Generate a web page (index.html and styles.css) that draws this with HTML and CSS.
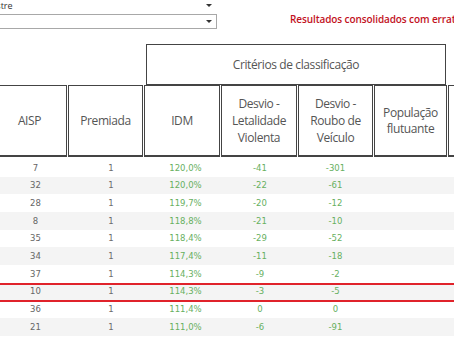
FILE: index.html
```html
<!DOCTYPE html>
<html lang="pt">
<head>
<meta charset="utf-8">
<link rel="stylesheet" href="styles.css">
</head>
<body>
<div class="page">
  <div class="top">
    <div class="filter">
      <div class="filter-title"><span class="ft-text">Semestre</span><span class="caret"></span></div>
      <div class="select"><span class="caret"></span></div>
    </div>
    <div class="notice">Resultados consolidados com errata</div>
  </div>

  <div class="group-row">
    <div class="group">Critérios de classificação</div>
  </div>

  <div class="thead">
    <div class="th">AISP</div>
    <div class="th">Premiada</div>
    <div class="th">IDM</div>
    <div class="th">Desvio -<br>Letalidade<br>Violenta</div>
    <div class="th">Desvio -<br>Roubo de<br>Veículo</div>
    <div class="th th-tight">População<br>flutuante</div>
    <div class="th"></div>
  </div>

  <div class="tbody">
    <div class="tr"><span class="c1">7</span><span class="c2">1</span><span class="c3">120,0%</span><span class="c4">-41</span><span class="c5">-301</span></div>
    <div class="tr"><span class="c1">32</span><span class="c2">1</span><span class="c3">120,0%</span><span class="c4">-22</span><span class="c5">-61</span></div>
    <div class="tr"><span class="c1">28</span><span class="c2">1</span><span class="c3">119,7%</span><span class="c4">-20</span><span class="c5">-12</span></div>
    <div class="tr"><span class="c1">8</span><span class="c2">1</span><span class="c3">118,8%</span><span class="c4">-21</span><span class="c5">-10</span></div>
    <div class="tr"><span class="c1">35</span><span class="c2">1</span><span class="c3">118,4%</span><span class="c4">-29</span><span class="c5">-52</span></div>
    <div class="tr"><span class="c1">34</span><span class="c2">1</span><span class="c3">117,4%</span><span class="c4">-11</span><span class="c5">-18</span></div>
    <div class="tr"><span class="c1">37</span><span class="c2">1</span><span class="c3">114,3%</span><span class="c4">-9</span><span class="c5">-2</span></div>
    <div class="tr tr-mark"><span class="c1">10</span><span class="c2">1</span><span class="c3">114,3%</span><span class="c4">-3</span><span class="c5">-5</span></div>
    <div class="tr"><span class="c1">36</span><span class="c2">1</span><span class="c3">111,4%</span><span class="c4">0</span><span class="c5">0</span></div>
    <div class="tr"><span class="c1">21</span><span class="c2">1</span><span class="c3">111,0%</span><span class="c4">-6</span><span class="c5">-91</span></div>
  </div>
</div>
</body>
</html>
```

FILE: styles.css
```css
html, body {
  margin: 0;
  padding: 0;
  background: #ffffff;
}
body {
  width: 454px;
  height: 341px;
  overflow: hidden;
  font-family: "Open Sans", "Noto Sans", sans-serif;
}
.page {
  width: 454px;
}

/* top filter bar */
.top {
  display: flex;
  height: 44px;
}
.filter {
  width: 217px;
  flex: none;
}
.filter-title {
  display: flex;
  align-items: center;
  height: 11px;
  font-size: 9px;
  color: #333;
  white-space: nowrap;
  padding-right: 5px;
}
.ft-text {
  margin-left: -27px;
  flex: 1;
  line-height: 11px;
}
.caret {
  width: 0;
  height: 0;
  border-left: 3px solid transparent;
  border-right: 3px solid transparent;
  border-top: 3px solid #333;
}
.select {
  margin-top: 3px;
  margin-left: -10px;
  height: 13px;
  border: 1px solid #a8a8a8;
  display: flex;
  align-items: center;
  justify-content: flex-end;
  padding-right: 4px;
}
.notice {
  margin-left: 73px;
  margin-top: 12px;
  font-size: 10px;
  font-weight: 600;
  color: #c2121e;
  white-space: nowrap;
  line-height: 14px;
  letter-spacing: -0.1px;
}

/* header group */
.group-row {
  padding-left: 146px;
}
.group {
  width: 300px;
  height: 41px;
  box-sizing: border-box;
  border: 1px solid #444;
  display: flex;
  align-items: center;
  justify-content: center;
  font-size: 12px;
  color: #555;
  letter-spacing: -0.4px;
}

/* header cells */
.thead {
  display: grid;
  grid-template-columns: 75px 75px 76px 76px 75px 73px 75px;
  column-gap: 1px;
  margin-left: -8px;
  width: 600px;
}
.th {
  height: 72px;
  box-sizing: border-box;
  border: 1px solid #444;
  border-bottom-width: 2px;
  display: flex;
  align-items: center;
  justify-content: center;
  text-align: center;
  font-size: 12px;
  line-height: 17px;
  color: #555;
  letter-spacing: -0.4px;
}
.th-tight {
  line-height: 16px;
}

/* body rows */
.tbody {
  margin-top: 2px;
  margin-left: -8px;
  width: 600px;
}
.tr {
  display: grid;
  grid-template-columns: 75px 75px 76px 76px 75px 73px 75px;
  column-gap: 1px;
  height: 17.67px;
  align-items: center;
  font-family: "DejaVu Sans", sans-serif;
  font-size: 8.5px;
  color: #666;
  position: relative;
}
.tr:nth-child(even) {
  background: #f4f4f4;
}
.tr span {
  text-align: center;
}
.c1 { padding-left: 12px; }
.c2 { padding-left: 11px; color: #6b6b6b; }
.c3 { padding-left: 7px; color: #67b05f; }
.c4 { padding-left: 2px; color: #67b05f; }
.c5 { color: #67b05f; }

.tr-mark::after {
  content: "";
  position: absolute;
  left: 0;
  right: 0;
  top: 0;
  bottom: -2px;
  border-top: 2px solid #e0232b;
  border-bottom: 2px solid #e0232b;
}
```
